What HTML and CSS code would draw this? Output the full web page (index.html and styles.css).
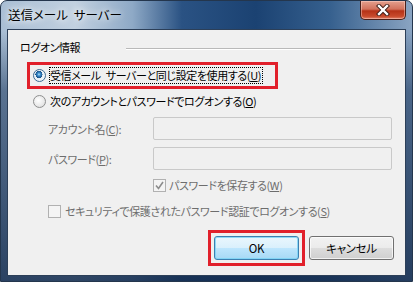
FILE: index.html
```html
<!DOCTYPE html>
<html>
<head>
    <title>送信メール サーバー</title>
    <link rel="stylesheet" href="styles.css">
</head>
<body>
    <div class="window">
        <div class="titlebar">
            <span class="title">送信メール サーバー</span>
            <span class="close">
                <svg width="14" height="12" viewBox="0 0 14 12">
                    <path d="M3 2 L11 10 M11 2 L3 10" stroke="#3a1a14" stroke-width="4.2" stroke-linecap="square"/>
                    <path d="M3 2 L11 10 M11 2 L3 10" stroke="#ffffff" stroke-width="2.4" stroke-linecap="square"/>
                </svg>
            </span>
        </div>
        <div class="client">
            <div class="group-head">
                <span class="group-label">ログオン情報</span>
                <span class="group-line"></span>
            </div>

            <!-- selected option, outlined in red -->
            <div class="mark mark-option">
                <div class="opt">
                    <span class="radio checked"></span>
                    <span class="label focus">受信メール サーバーと同じ設定を使用する(<u>U</u>)</span>
                </div>
            </div>
            <div class="opt opt-second">
                <span class="radio"></span>
                <span class="label">次のアカウントとパスワードでログオンする(<u>O</u>)</span>
            </div>

            <div class="field">
                <span class="field-label">アカウント名(<u>C</u>):</span>
                <span class="input"></span>
            </div>
            <div class="field field-pw">
                <span class="field-label">パスワード(<u>P</u>):</span>
                <span class="input"></span>
            </div>

            <div class="check check-save">
                <span class="box">
                    <svg width="9" height="9" viewBox="0 0 9 9">
                        <path d="M1 4.5 L3.5 7.5 L8 1" fill="none" stroke="#8c8c8c" stroke-width="1.6"/>
                    </svg>
                </span>
                <span class="check-text">パスワードを保存する(<u>W</u>)</span>
            </div>
            <div class="check check-secure">
                <span class="box"></span>
                <span class="check-text">セキュリティで保護されたパスワード認証でログオンする(<u>S</u>)</span>
            </div>

            <div class="buttons">
                <div class="mark mark-ok">
                    <button class="btn btn-default">OK</button>
                </div>
                <button class="btn">キャンセル</button>
            </div>
        </div>
    </div>
</body>
</html>
```

FILE: styles.css
```css
body {
    margin: 0;
    padding: 0;
    background-color: #ffffff;
    font-family: "Noto Sans CJK JP", "Noto Sans", sans-serif;
    font-size: 11px;
    letter-spacing: -0.4px;
    word-spacing: 3px;
    font-feature-settings: "palt";
}

.window {
    width: 413px;
    height: 282px;
    box-sizing: border-box;
    border: 1px solid #24364d;
    border-radius: 7px 7px 0 0;
    display: flex;
    flex-direction: column;
    background:
        linear-gradient(to bottom, rgba(0, 0, 0, 0) 0, rgba(0, 0, 0, 0) 30px, rgba(24, 52, 90, 0.55) 90px, rgba(20, 44, 78, 0.85) 100%),
        linear-gradient(to right, #a9bed4 0, #c2d1e0 18%, #8ea9c6 32%, #2a5283 44%, #1b4272 62%, #36608e 80%, #8aa4c2 100%);
}

.titlebar {
    height: 28px;
    display: flex;
    align-items: flex-start;
}

.title {
    margin: 6px 0 0 7px;
    padding: 0 6px 0 0;
    line-height: 16px;
    color: #000;
    font-size: 12.5px;
    letter-spacing: 0;
    text-shadow: 0 0 6px #ffffff, 0 0 10px #ffffff;
}

.close {
    margin-left: auto;
    margin-right: 6px;
    width: 46px;
    height: 19px;
    box-sizing: border-box;
    border: 1px solid #4a201a;
    border-top: none;
    border-radius: 0 0 5px 5px;
    display: flex;
    align-items: center;
    justify-content: center;
    background: linear-gradient(to bottom, #e4a08e 0, #d2725c 45%, #b53218 55%, #c84a2c 85%, #e0826a 100%);
    box-shadow: inset 0 0 0 1px rgba(255, 220, 210, 0.45);
}

.client {
    flex: 1;
    margin: 0 6px 5px;
    background-color: #f0f0f0;
    border: 1px solid #2c3f58;
    display: flex;
    flex-direction: column;
}

.group-head {
    display: flex;
    align-items: center;
    margin-top: 10px;
    height: 14px;
}

.group-label {
    margin-left: 12px;
    line-height: 14px;
}

.group-line {
    margin-left: 46px;
    margin-right: 14px;
    margin-top: 4px;
    flex: 1;
    border-top: 1px solid #b9b9b9;
    border-bottom: 1px solid #ffffff;
}

.mark {
    border: 3px solid #e1202b;
}

.mark-option {
    margin-top: 8px;
    margin-left: 19px;
    width: 245px;
    height: 21px;
}

.opt {
    display: flex;
    align-items: center;
    height: 21px;
}

.opt-second {
    margin-left: 22px;
    height: 24px;
}

.radio {
    width: 13px;
    height: 13px;
    box-sizing: border-box;
    margin-left: 3px;
    margin-right: 3px;
    border-radius: 50%;
    border: 1px solid #8e8f8f;
    background: radial-gradient(circle at 40% 40%, #ffffff 0, #e8e8e8 60%, #d4d4d4 100%);
    flex-shrink: 0;
}

.radio.checked {
    border-color: #3d6a91;
    background:
        radial-gradient(circle at 45% 40%, #bde4fa 0, #3a8fcf 1.5px, #1b4f85 3.5px, rgba(0, 0, 0, 0) 3.6px),
        radial-gradient(circle, #dfe9f2 0, #f4f8fb 100%);
}

.label {
    border: 1px dotted transparent;
    line-height: 15px;
    padding: 0 1px 0 0;
    white-space: nowrap;
}

.label.focus {
    border-color: #000;
}

.field {
    display: flex;
    align-items: center;
    margin-top: 4px;
    padding-left: 40px;
    color: #6d6d6d;
}

.field-pw {
    margin-top: 7px;
}

.field-label {
    width: 105px;
}

.input {
    width: 239px;
    height: 23px;
    box-sizing: border-box;
    border: 1px solid #c9c9c9;
    border-radius: 2px;
    background-color: #f0f0f0;
}

.check {
    display: flex;
    align-items: center;
    height: 16px;
    color: #6d6d6d;
    white-space: nowrap;
}

.check-save {
    margin-top: 7px;
    padding-left: 145px;
}

.check-secure {
    margin-top: 10px;
    padding-left: 40px;
}

.box {
    width: 13px;
    height: 13px;
    box-sizing: border-box;
    border: 1px solid #b1b1b1;
    background-color: #f4f4f4;
    display: flex;
    align-items: center;
    justify-content: center;
    margin-right: 3px;
    flex-shrink: 0;
}

.check-secure .box {
    margin-right: 4px;
}

.buttons {
    display: flex;
    align-items: center;
    justify-content: flex-end;
    gap: 4px;
    margin-top: 11px;
    padding-right: 11px;
}

.mark-ok {
    padding: 3px;
}

.btn {
    width: 85px;
    height: 24px;
    padding: 0;
    margin: 0;
    font-family: "Noto Sans CJK JP", "Noto Sans", sans-serif;
    font-size: 11.5px;
    letter-spacing: -0.3px;
    font-feature-settings: "palt";
    color: #000;
    border: 1px solid #707070;
    border-radius: 3px;
    background: linear-gradient(to bottom, #f2f2f2 0, #ebebeb 50%, #dddddd 50%, #cfcfcf 100%);
    box-shadow: inset 0 0 0 1px rgba(255, 255, 255, 0.7);
}

.btn-default {
    border-color: #3c7fb1;
    background: linear-gradient(to bottom, #eaf6fd 0, #d9f0fc 50%, #bee6fd 50%, #a7d9f5 100%);
    box-shadow: inset 0 0 0 1px rgba(120, 210, 245, 0.8);
}
```
